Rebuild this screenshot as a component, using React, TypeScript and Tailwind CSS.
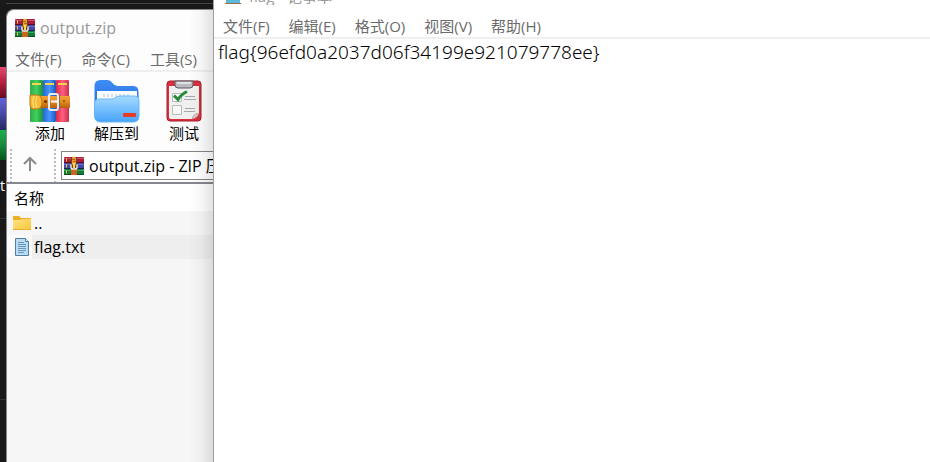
import React from "react";

const UI = "font-['Open_Sans','Noto_Sans_CJK_SC',sans-serif]";

function BooksIcon() {
  return (
    <svg width="20" height="18" viewBox="0 0 20 18" className="shrink-0" aria-hidden="true">
      <rect width="20" height="6" rx="1" fill="#a81e3c" />
      <rect y="1" width="20" height="1" fill="#d3506c" />
      <rect y="5" width="20" height="1" fill="#5c0d22" />
      <rect y="6" width="20" height="6" fill="#4547a0" />
      <rect y="7" width="20" height="1" fill="#6f71c8" />
      <rect y="11" width="20" height="1" fill="#202152" />
      <rect y="12" width="20" height="6" rx="1" fill="#147a3a" />
      <rect y="13" width="20" height="1" fill="#36a85c" />
      <rect y="17" width="20" height="1" fill="#0b4d24" />
      <path d="M2.500 1.500v3M2.500 7.500v3M2.500 13.500v3" stroke="#f3c63a" strokeWidth="1" />
      <rect x="7" width="6" height="18" fill="#6f3f18" />
      <rect x="8" width="4" height="8" rx="1" fill="#e8a02a" />
      <rect x="7" y="12" width="6" height="6" fill="#c9661c" />
      <path d="M7 7.500v3q0 1.500 1.500 1.500h3q1.500 0 1.500-1.500v-3" fill="none" stroke="#eef0f2" strokeWidth="1.400" />
      <rect x="9" y="6" width="2" height="5" fill="#f7d65c" />
      <path d="M8 2.500h3M9 4.500h3" stroke="#b5640f" strokeWidth="1" />
    </svg>
  );
}

function AddIcon() {
  return (
    <svg width="42" height="44" viewBox="0 0 42 44" aria-hidden="true">
      <defs>
        <linearGradient id="g1"><stop stopColor="#35a84a" /><stop offset=".5" stopColor="#3ed15d" /><stop offset="1" stopColor="#1f8f38" /></linearGradient>
        <linearGradient id="g2"><stop stopColor="#2467d6" /><stop offset=".5" stopColor="#4796ff" /><stop offset="1" stopColor="#1d55bd" /></linearGradient>
        <linearGradient id="g3"><stop stopColor="#dc2848" /><stop offset=".5" stopColor="#ff6080" /><stop offset="1" stopColor="#c9304a" /></linearGradient>
        <linearGradient id="belt" x2="0" y2="1"><stop stopColor="#f4a338" /><stop offset=".5" stopColor="#e08a1e" /><stop offset="1" stopColor="#b85e10" /></linearGradient>
      </defs>
      <rect x="1" y="1" width="13" height="42" rx="1" fill="url(#g1)" />
      <rect x="14" y="1" width="13" height="42" rx="1" fill="url(#g2)" />
      <rect x="27" y="1" width="13" height="42" rx="1" fill="url(#g3)" />
      <path d="M3 5h9M16 5h9M29 5h9" stroke="#f8d44b" strokeWidth="2" />
      <rect x="1" y="17" width="40" height="12" rx="1" fill="url(#belt)" />
      <path d="M1 16h7q5 0 5 7t-5 7H3q-2-2-2-4z" fill="#f7ba35" stroke="#bd7616" />
      <path d="M5 17q-3 5 0 12M8 17q-3 5 0 12" stroke="#ffe58a" fill="none" />
      <rect x="15" y="21" width="3" height="3" rx="1.500" fill="#6a3305" />
      <rect x="20" y="15" width="9" height="16" rx="2" fill="none" stroke="#e9eaec" strokeWidth="2" />
      <path d="M22 22.500h7" stroke="#fff" strokeWidth="2" />
      <path d="M30.500 15v16" stroke="#7d6d65" />
      <circle cx="35" cy="22" r="1" fill="#8b490a" />
    </svg>
  );
}

function ExtractIcon() {
  return (
    <svg width="46" height="44" viewBox="0 0 46 44" aria-hidden="true">
      <defs>
        <linearGradient id="fb" x2="0" y2="1"><stop stopColor="#3e8df5" /><stop offset="1" stopColor="#1f66d8" /></linearGradient>
        <linearGradient id="ff" x2="0" y2="1"><stop stopColor="#a6dcff" /><stop offset="1" stopColor="#47a2f8" /></linearGradient>
      </defs>
      <path d="M0.500 7q0-6 6-6h7q3 0 5 3t5 3h16q5 0 5 6v24H.5z" fill="url(#fb)" />
      <rect x="3" y="12" width="40" height="20" fill="#f9fbfe" />
      <path d="M10 15v3M14 15v3M18 15v3M22 15v3M26 15v3M30 15v3M34 15v3" stroke="#b6c2d6" />
      <path d="M.5 25q0-5 5-5h11q3 0 5-1.500T27 17h13q5 0 5 5v15q0 6-6 6H7q-6.500 0-6.500-6z" fill="url(#ff)" stroke="#68b6fb" />
      <rect x="29" y="34" width="13" height="4" rx="1" fill="#e63a26" />
    </svg>
  );
}

function TestIcon() {
  return (
    <svg width="36" height="42" viewBox="0 0 36 42" aria-hidden="true">
      <rect x="1" y="1" width="34" height="40" rx="3" fill="#d8303c" stroke="#a91f2c" />
      <path d="M3 6h30v27q-6 0-7 6H5q-2 0-2-2z" fill="#f0f0f1" />
      <path d="M33 33q-6 0-7 6 6-1 7-6z" fill="#c9c9cd" />
      <path d="M9 1h18v4q0 3-3 3H12q-3 0-3-3z" fill="#b9bac0" stroke="#585a62" />
      <path d="M11 3h14" stroke="#efeff2" strokeWidth="1.500" />
      <path d="M6.500 13.500h9v8h-9zM6.500 25.500h9v9h-9z" fill="#f8f8f8" stroke="#b9babd" />
      <path d="M8 15.500l4 4q3-5 9-8" fill="none" stroke="#258b35" strokeWidth="3" />
      <path d="M19 16.500h10M18 19.500h12M19 28.500h10M18 31.500h11" stroke="#a7a8ad" />
    </svg>
  );
}

function FolderIcon() {
  return (
    <svg width="18" height="15" viewBox="0 0 18 15" aria-hidden="true">
      <defs><linearGradient id="yf" x2="1" y2="1"><stop stopColor="#ffe28a" /><stop offset="1" stopColor="#f9c735" /></linearGradient></defs>
      <path d="M0 1q0-1 1-1h5l2 2h9q1 0 1 1v4H0z" fill="#eeb01f" />
      <path d="M0 4h7l2-1h9v10q0 1-1 1H1q-1 0-1-1z" fill="url(#yf)" />
      <path d="M0 13.500h18" stroke="#e4ae30" />
    </svg>
  );
}

function TextFileIcon() {
  return (
    <svg width="16" height="18" viewBox="0 0 16 18" aria-hidden="true">
      <path d="M1.500.5h10l3 3v14h-13z" fill="#b9dcf5" stroke="#557d9f" />
      <path d="M11.500.5v3h3" fill="#eef7fd" stroke="#557d9f" />
      <path d="M4 4.500h6M4 6.500h8M4 8.500h8M4 10.500h8M4 12.500h8M4 14.500h6" stroke="#6998bb" />
    </svg>
  );
}

function Grip() {
  return <div className="w-[2px] self-stretch bg-[repeating-linear-gradient(to_bottom,#bcbcbc_0px,#bcbcbc_2px,transparent_2px,transparent_4px)]" />;
}

function Tool({ label, width, children }: { label: string; width: string; children: React.ReactNode }) {
  return (
    <button className={`flex shrink-0 flex-col items-center ${width}`}>
      <span className="flex h-11 items-center">{children}</span>
      <span className="text-[15px] leading-5 whitespace-nowrap text-black">{label}</span>
    </button>
  );
}

function Desktop() {
  return (
    <div className="flex w-[6px] shrink-0 flex-col overflow-hidden bg-[#191919] pt-[67px]">
      <div className="h-[31px] shrink-0 bg-linear-to-b from-[#e34b70] via-[#b51e3c] to-[#650d20]" />
      <div className="h-[32px] shrink-0 bg-linear-to-b from-[#6265d8] via-[#4749a8] to-[#25265f]" />
      <div className="h-[30px] shrink-0 bg-linear-to-b from-[#21ae50] via-[#188a3c] to-[#0a5322]" />
      <span className="mt-4 text-[14px] leading-5 text-white">t</span>
      <div className="mt-[22px] h-px shrink-0 bg-[#303030]" />
      <div className="mt-[180px] h-px shrink-0 bg-[#303030]" />
    </div>
  );
}

function Archive() {
  return (
    <div className="flex w-[207px] shrink-0 flex-col bg-[#191919]">
      <div className="h-[9px] shrink-0 bg-[linear-gradient(to_bottom,#191919_3px,#454545_3px,#454545_4px,#191919_4px)]" />
      <section className="relative flex flex-1 flex-col overflow-hidden rounded-tl-lg border-t border-l border-[#85888e] bg-[#fdfdfd]">
        <header className="flex h-9 shrink-0 items-center gap-[5px] pl-2 text-[16px] text-[#999]">
          <BooksIcon />
          <h1>output.zip</h1>
        </header>
        <nav className="flex h-[26px] shrink-0 items-center gap-5 border-b-2 border-[#efefef] pt-[2px] pl-2 text-[15px] whitespace-nowrap text-[#6b6b6b]">
          <button>文件(F)</button>
          <button>命令(C)</button>
          <button>工具(S)</button>
        </nav>
        <div className="flex h-[77px] shrink-0 items-start pl-[3px]">
          <Grip />
          <div className="flex pt-[7px] pl-[10px]">
            <Tool label="添加" width="w-[60px]"><AddIcon /></Tool>
            <Tool label="解压到" width="w-[73px]"><ExtractIcon /></Tool>
            <Tool label="测试" width="w-[62px]"><TestIcon /></Tool>
          </div>
        </div>
        <div className="flex h-[33px] shrink-0 items-center pl-[3px]">
          <Grip />
          <button aria-label="Up" className="flex w-[42px] items-center justify-center pr-[6px] pb-1">
            <svg width="16" height="16" viewBox="0 0 16 16" fill="none" stroke="#8a8a8a" strokeWidth="2"><path d="M8 15V2M2 8l6-6 6 6" /></svg>
          </button>
          <Grip />
          <div className="ml-[5px] flex h-[29px] flex-1 items-center gap-[5px] overflow-hidden border border-r-0 border-[#858585] bg-white pl-[2px]">
            <BooksIcon />
            <input aria-label="Address" readOnly value="output.zip - ZIP 压缩文件" className="w-[220px] shrink-0 bg-transparent text-[16px] text-black outline-none" />
          </div>
        </div>
        <table className="block flex-1 border-t-2 border-[#85888e] bg-[#f6f6f6] text-[16px] text-black">
          <thead className="block">
            <tr className="flex h-[27px] items-center bg-white pt-[2px] pl-[7px]"><th className="text-[15px] font-normal">名称</th></tr>
          </thead>
          <tbody className="block">
            <tr className="flex h-6 items-center"><td className="flex items-center gap-[3px] pl-[6px] leading-6"><FolderIcon />..</td></tr>
            <tr className="flex h-6 items-center"><td className="flex flex-1 items-center leading-6"><span className="flex w-[25px] justify-end bg-[#fafafa] py-[3px] pr-[2px]"><TextFileIcon /></span><span className="flex-1 bg-[#eeeeee] pl-[2px]">flag.txt</span></td></tr>
          </tbody>
        </table>
        <div className="pointer-events-none absolute inset-y-0 right-0 w-6 bg-[linear-gradient(to_right,transparent,rgba(0,0,0,0.03)_50%,rgba(0,0,0,0.11))]" />
      </section>
    </div>
  );
}

function Notepad() {
  return (
    <main className="flex min-w-0 flex-1 flex-col border-l border-[#a0a0a0] bg-white">
      <header className="flex h-[5px] shrink-0 items-end gap-2 overflow-hidden pl-[11px] text-[15px] leading-[18px] text-[#999]">
        <svg width="16" height="18" viewBox="0 0 16 18" className="shrink-0" aria-hidden="true">
          <rect x="1" width="14" height="17" fill="#59b9dc" />
          <path d="M0 16.500h16" stroke="#9b6744" strokeWidth="1" />
        </svg>
        <h2>flag - 记事本</h2>
      </header>
      <nav className="flex h-[34px] shrink-0 items-center gap-[19px] border-b-2 border-[#efefef] pt-[10px] pl-[9px] text-[15px] whitespace-nowrap text-[#6b6b6b]">
        <button>文件(F)</button>
        <button>编辑(E)</button>
        <button>格式(O)</button>
        <button>视图(V)</button>
        <button>帮助(H)</button>
      </nav>
      <textarea aria-label="Document" readOnly spellCheck={false} defaultValue="flag{96efd0a2037d06f34199e921079778ee}" className="block w-full flex-1 resize-none bg-white pl-1 font-['Noto_Sans',sans-serif] text-[19px] leading-[26px] font-light text-black outline-none" />
    </main>
  );
}

export default function App() {
  return (
    <div className={`flex h-screen overflow-hidden bg-white ${UI}`}>
      <Desktop />
      <Archive />
      <Notepad />
    </div>
  );
}
